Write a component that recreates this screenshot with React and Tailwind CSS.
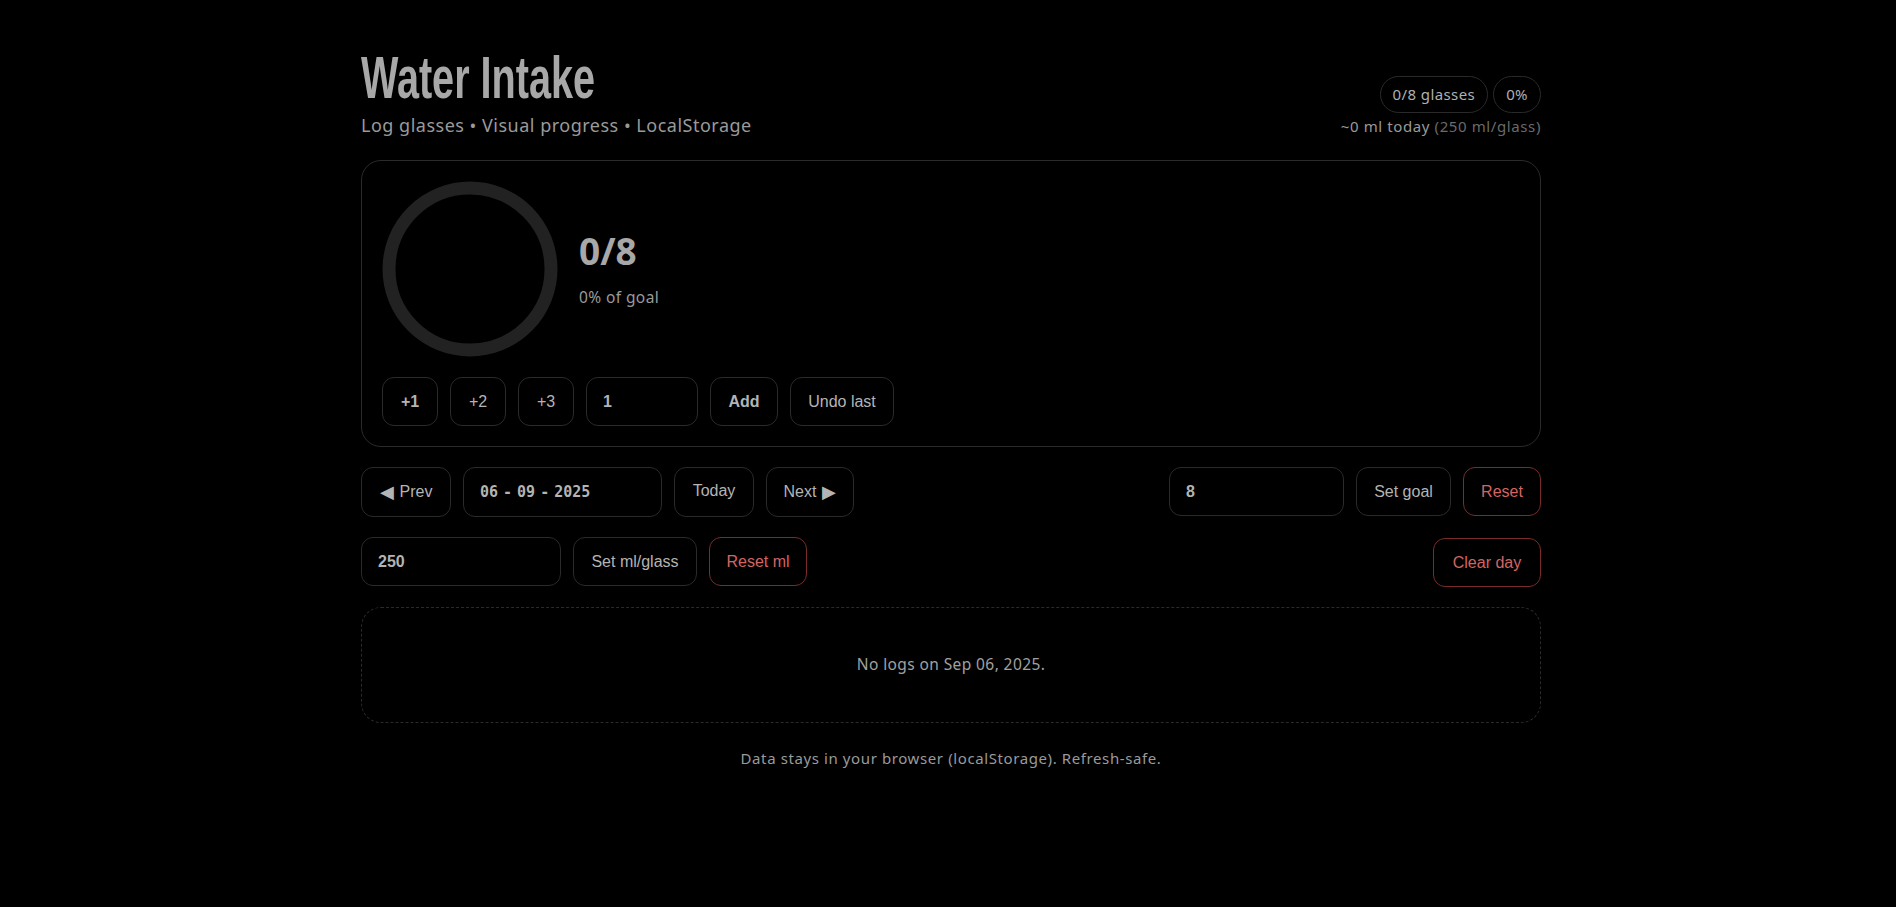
import React from "react";

const btn =
  "h-[49px] rounded-xl border border-[#2a2a2a] bg-black text-[16px] text-[#b4b4b4] font-['Liberation_Sans',Arial,sans-serif]";
const dangerBtn =
  "h-[49px] rounded-xl border border-[#7a2c2c] bg-black text-[16px] text-[#d46464] font-['Liberation_Sans',Arial,sans-serif]";
const field =
  "h-[49px] rounded-xl border border-[#2a2a2a] bg-black px-4 flex items-center text-[16px] font-bold text-[#b4b4b4] font-['Liberation_Sans',Arial,sans-serif]";

const Ring = () => (
  <svg width="176" height="176" viewBox="0 0 176 176" className="shrink-0">
    <circle cx="88" cy="88" r="81" fill="none" stroke="#222222" strokeWidth="13" />
  </svg>
);

const WaterIntake = () => {
  return (
    <div className="min-h-screen bg-black text-[#a8a8a8] font-['Noto_Sans',sans-serif]">
      <div className="w-[1180px] ml-[calc(50%-587px)] pt-[46px]">
        {/* Header */}
        <div className="flex items-end justify-between">
          <div>
            <h1 className="origin-left scale-x-[0.66] inline-block whitespace-nowrap text-[60px] leading-[64px] font-bold text-[#a8a8a8] font-['Liberation_Sans_Narrow','Liberation_Sans',sans-serif]">
              Water Intake
            </h1>
            <p className="text-[18px] leading-[24px] tracking-[0.5px] text-[#9a9a9a] mt-[3px]">
              Log glasses • Visual progress • LocalStorage
            </p>
          </div>
          <div className="flex flex-col items-end">
            <div className="flex gap-[5px]">
              <span className="h-[37px] px-[12px] rounded-full border border-[#2a2a2a] flex items-center text-[15px] tracking-[0.4px] text-[#b0b0b0]">
                0/8 glasses
              </span>
              <span className="h-[37px] px-[12px] rounded-full border border-[#2a2a2a] flex items-center text-[15px] tracking-[0.4px] text-[#b0b0b0]">
                0%
              </span>
            </div>
            <p className="text-[15px] leading-[22px] mt-[2px] tracking-[0.6px] text-[#9a9a9a]">
              ~0 ml today <span className="text-[#6a6a6a]">(250 ml/glass)</span>
            </p>
          </div>
        </div>

        {/* Progress card */}
        <div className="mt-[23px] rounded-[20px] border border-[#2b2b2b] p-5">
          <div className="flex items-center gap-[21px]">
            <Ring />
            <div>
              <div className="text-[37px] leading-[44px] font-bold text-[#a8a8a8]">0/8</div>
              <div className="text-[15.5px] mt-[13px] tracking-[0.4px] text-[#9a9a9a]">0% of goal</div>
            </div>
          </div>
          <div className="mt-5 flex gap-[12px]">
            <button className={`${btn} w-[56px] font-bold`}>+1</button>
            <button className={`${btn} w-[56px]`}>+2</button>
            <button className={`${btn} w-[56px]`}>+3</button>
            <div className={`${field} w-[112px]`}>1</div>
            <button className={`${btn} w-[68px] font-bold`}>Add</button>
            <button className={`${btn} w-[104px]`}>Undo last</button>
          </div>
        </div>

        {/* Date + goal */}
        <div className="mt-5 flex justify-between">
          <div className="flex gap-[12px]">
            <button className={`${btn} w-[90px] h-[50px] flex items-center justify-center gap-[6px]`}>
              <span className="text-[18px]">◀</span>Prev
            </button>
            <div className="h-[50px] w-[199px] rounded-xl border border-[#2a2a2a] px-[16px] flex items-center gap-[5px] text-[15px] font-bold text-[#b4b4b4] font-['DejaVu_Sans_Mono',monospace]">
              <span>06</span>
              <span>-</span>
              <span>09</span>
              <span>-</span>
              <span>2025</span>
            </div>
            <button className={`${btn} w-[80px] h-[50px] pb-[2px]`}>Today</button>
            <button className={`${btn} w-[88px] h-[50px] flex items-center justify-center gap-[6px]`}>
              Next<span className="text-[18px]">▶</span>
            </button>
          </div>
          <div className="flex gap-[12px]">
            <div className={`${field} w-[175px]`}>8</div>
            <button className={`${btn} w-[95px]`}>Set goal</button>
            <button className={`${dangerBtn} w-[78px]`}>Reset</button>
          </div>
        </div>

        {/* ml per glass */}
        <div className="mt-5 flex justify-between">
          <div className="flex gap-[12px]">
            <div className={`${field} w-[200px]`}>250</div>
            <button className={`${btn} w-[124px]`}>Set ml/glass</button>
            <button className={`${dangerBtn} w-[98px]`}>Reset ml</button>
          </div>
          <button className={`${dangerBtn} w-[108px] h-[47px] mt-[1px]`}>Clear day</button>
        </div>

        {/* Logs */}
        <div className="mt-5 h-[116px] rounded-[20px] border border-dashed border-[#2a2a2a] flex items-center justify-center text-[15.5px] tracking-[0.4px] text-[#a0a0a0]">
          No logs on Sep 06, 2025.
        </div>

        <p className="mt-[24px] text-center text-[15px] tracking-[0.6px] text-[#9a9a9a]">
          Data stays in your browser (localStorage). Refresh-safe.
        </p>
      </div>
    </div>
  );
};

export default WaterIntake;
